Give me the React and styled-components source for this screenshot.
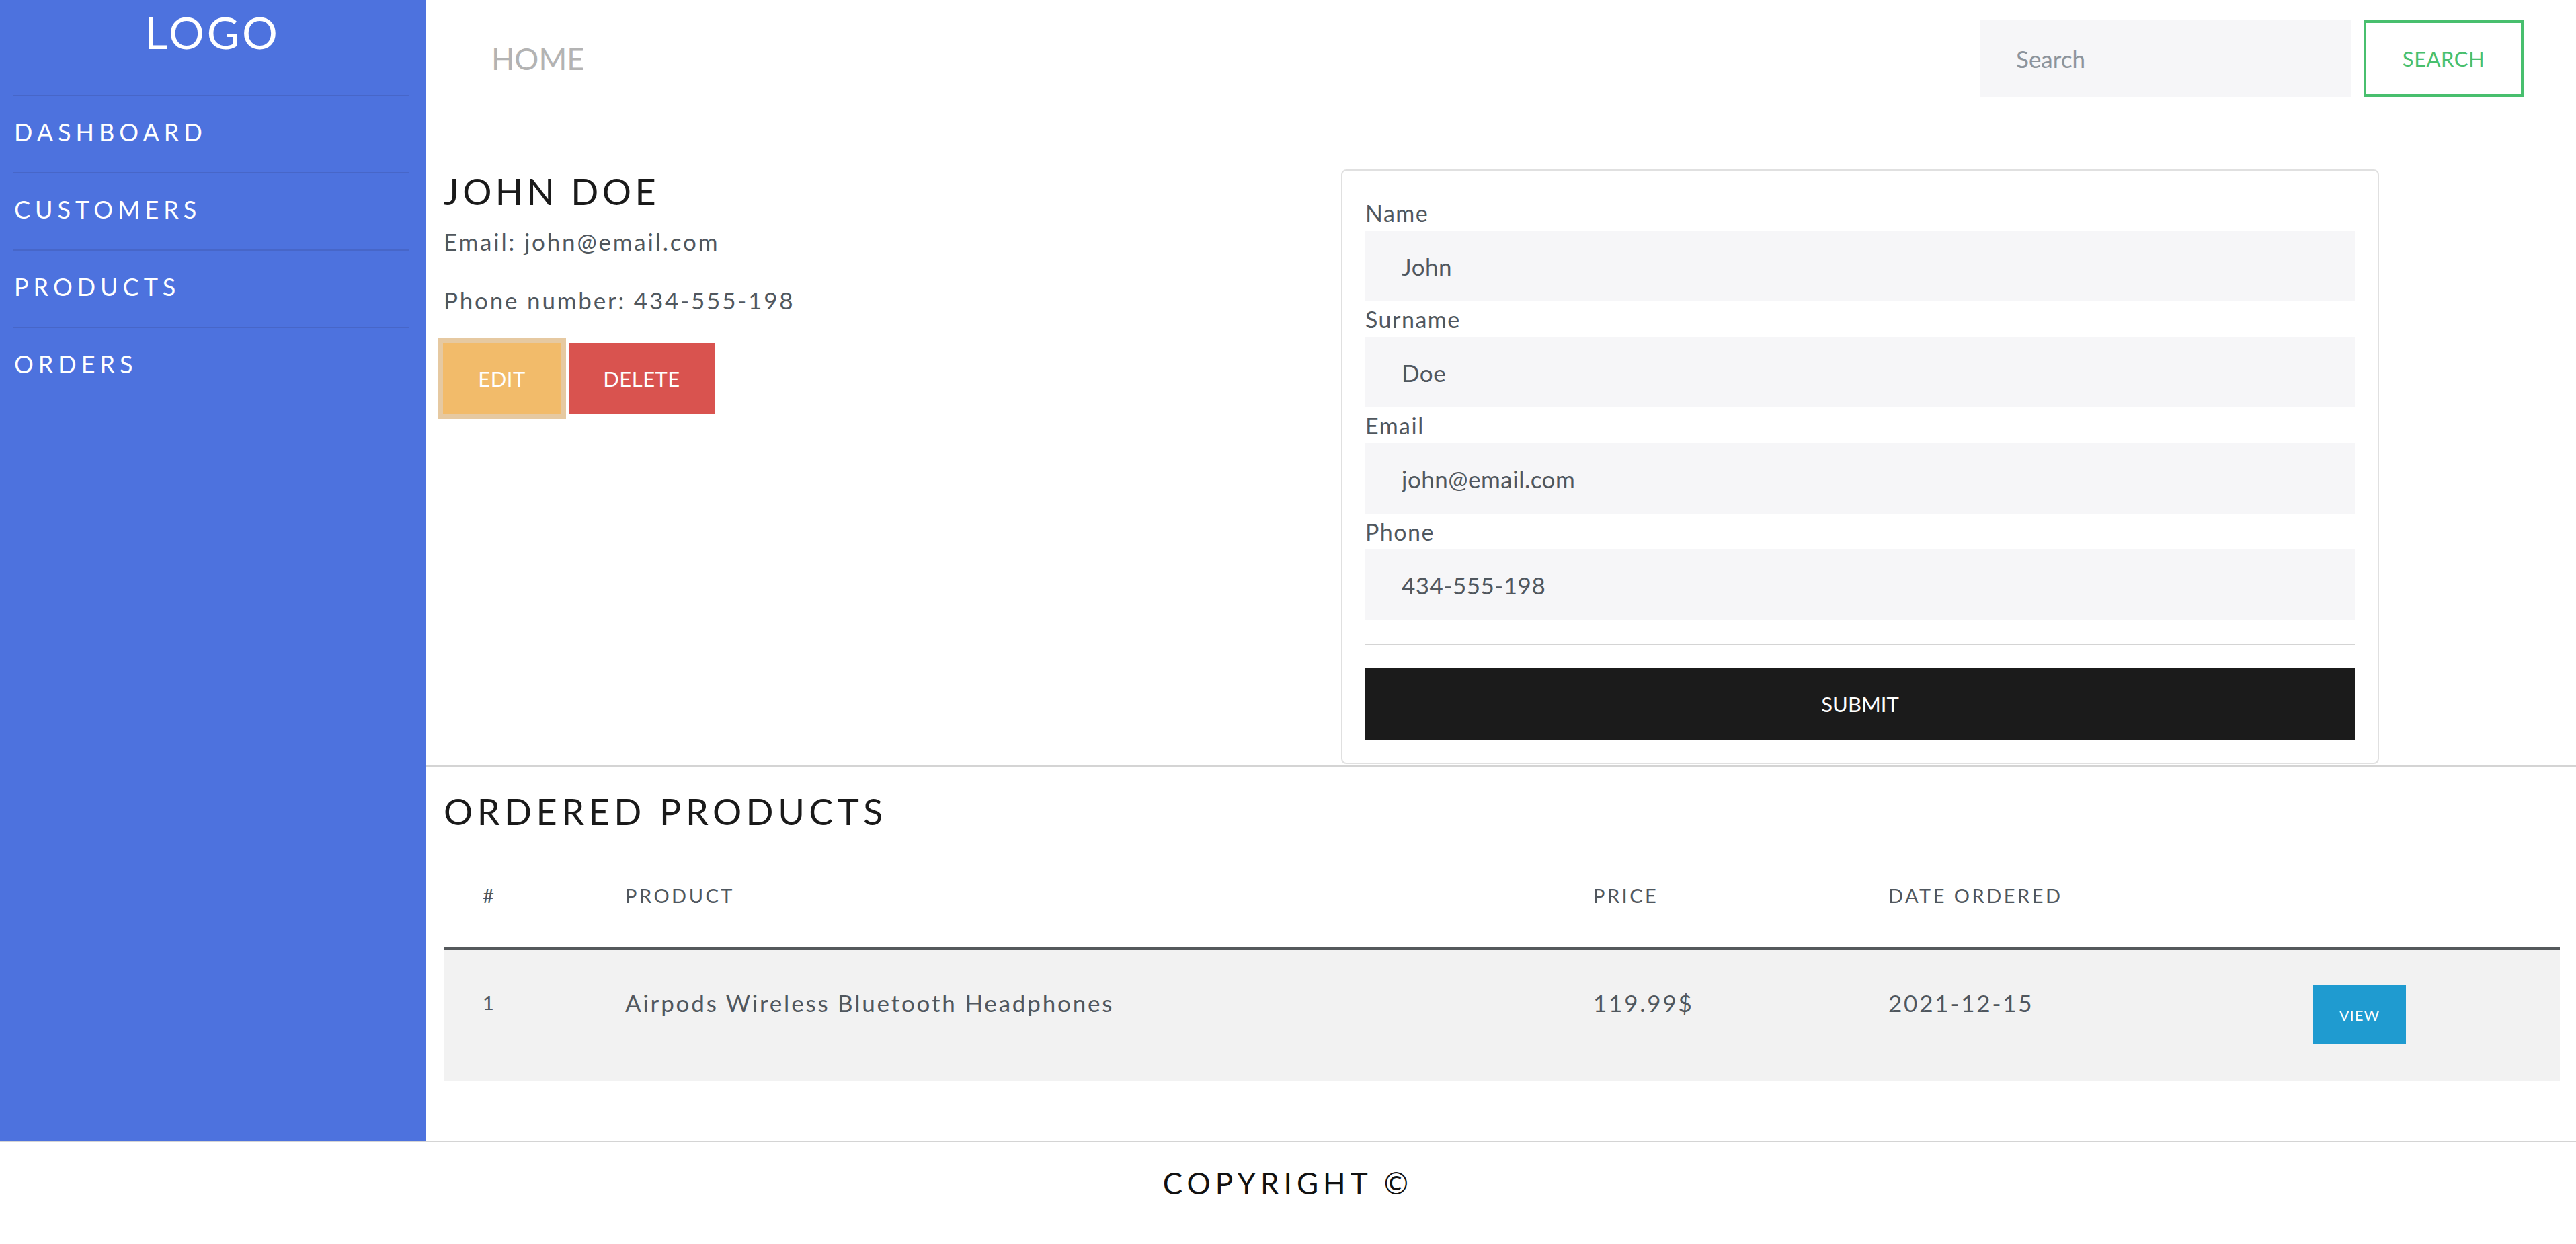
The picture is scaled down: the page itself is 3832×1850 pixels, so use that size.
import styled, { createGlobalStyle } from "styled-components";

const GlobalStyle = createGlobalStyle`
  html, body {
    margin: 0;
    padding: 0;
    background: #ffffff;
    font-family: Lato, "Open Sans", sans-serif;
  }
  * { box-sizing: border-box; }
`;

const customer = {
  name: "John",
  surname: "Doe",
  email: "john@email.com",
  phone: "434-555-198",
};

const orders = [
  { id: 1, product: "Airpods Wireless Bluetooth Headphones", price: "119.99$", date: "2021-12-15" },
];

const navItems = ["DASHBOARD", "CUSTOMERS", "PRODUCTS", "ORDERS"];

const columns = [
  { label: "#", width: 212 },
  { label: "PRODUCT", width: 1440 },
  { label: "PRICE", width: 439 },
  { label: "DATE ORDERED", width: 632 },
  { label: "", width: 425 },
];

export default function App() {
  return (
    <>
      <GlobalStyle />
      <Layout>
        <Sidebar>
          <Logo>LOGO</Logo>
          {navItems.map((item) => (
            <NavItem key={item}>{item}</NavItem>
          ))}
        </Sidebar>
        <Main>
          <TopBar>
            <HomeLink>HOME</HomeLink>
            <SearchForm>
              <SearchInput placeholder="Search" />
              <SearchButton>SEARCH</SearchButton>
            </SearchForm>
          </TopBar>

          <Details>
            <Info>
              <Heading $spacing="0.1em">JOHN DOE</Heading>
              <InfoLine>Email: {customer.email}</InfoLine>
              <InfoLine $gap>Phone number: {customer.phone}</InfoLine>
              <Actions>
                <ActionButton $color="#f2bb6a" $focused>EDIT</ActionButton>
                <ActionButton $color="#d9534f">DELETE</ActionButton>
              </Actions>
            </Info>
            <Card>
              <Label>Name</Label>
              <Field defaultValue={customer.name} />
              <Label>Surname</Label>
              <Field defaultValue={customer.surname} />
              <Label>Email</Label>
              <Field defaultValue={customer.email} />
              <Label>Phone</Label>
              <Field defaultValue={customer.phone} />
              <Divider />
              <SubmitButton>SUBMIT</SubmitButton>
            </Card>
          </Details>

          <Ordered>
            <Heading>ORDERED PRODUCTS</Heading>
            <Table>
              <colgroup>
                {columns.map((c, i) => (
                  <col key={i} style={{ width: c.width }} />
                ))}
              </colgroup>
              <thead>
                <tr>
                  {columns.map((c, i) => (
                    <Th key={i}>{c.label}</Th>
                  ))}
                </tr>
              </thead>
              <tbody>
                {orders.map((o) => (
                  <tr key={o.id}>
                    <Td $small>{o.id}</Td>
                    <Td>{o.product}</Td>
                    <Td>{o.price}</Td>
                    <Td>{o.date}</Td>
                    <Td>
                      <ViewButton>VIEW</ViewButton>
                    </Td>
                  </tr>
                ))}
              </tbody>
            </Table>
          </Ordered>
        </Main>
      </Layout>
      <Footer>COPYRIGHT ©</Footer>
    </>
  );
}

const Layout = styled.div`
  display: flex;
  min-height: 1697px;
`;

const Sidebar = styled.aside`
  width: 634px;
  flex-shrink: 0;
  background-color: #4d72de;
  padding: 0 26px 0 20px;
`;

const Logo = styled.div`
  height: 141px;
  color: #ffffff;
  font-size: 66px;
  letter-spacing: 4px;
  text-align: center;
  line-height: 96px;
  padding-left: 4px;
`;

const NavItem = styled.div`
  height: 115px;
  border-top: 2px solid #4766c8;
  display: flex;
  align-items: center;
  padding: 0 0 8px 1px;
  color: #ffffff;
  font-size: 36px;
  letter-spacing: 7px;
`;

const Main = styled.main`
  flex: 1;
  min-width: 0;
`;

const TopBar = styled.header`
  height: 178px;
  display: flex;
  align-items: center;
  justify-content: space-between;
  padding: 0 78px 4px 97px;
`;

const HomeLink = styled.span`
  color: #b3b3b3;
  font-size: 45px;
`;

const SearchForm = styled.form`
  display: flex;
  gap: 18px;
  margin: 0;
`;

const SearchInput = styled.input`
  width: 553px;
  height: 114px;
  border: none;
  outline: none;
  background: #f6f6f8;
  padding: 0 54px;
  font-family: inherit;
  font-size: 35px;
  color: #50575e;
  &::placeholder {
    color: #8d949c;
  }
`;

const SearchButton = styled.button`
  width: 238px;
  height: 114px;
  background: #ffffff;
  border: 4px solid #48bf6e;
  color: #48bf6e;
  font-family: inherit;
  font-size: 31px;
  letter-spacing: 0.5px;
`;

const Details = styled.section`
  display: grid;
  grid-template-columns: 1335px 1544px;
  padding: 74px 0 0 26px;
`;

const Info = styled.div`
  padding-top: 0;
`;

const Heading = styled.h2`
  margin: 0;
  font-size: 54px;
  font-weight: 400;
  line-height: 65px;
  letter-spacing: ${(p) => p.$spacing || "0.12em"};
  color: #1a1a1a;
`;

const InfoLine = styled.p`
  margin: ${(p) => (p.$gap ? "35px" : "16px")} 0 0;
  font-size: 35px;
  line-height: 52px;
  letter-spacing: 2.8px;
  color: #50575e;
`;

const Actions = styled.div`
  display: flex;
  gap: 12px;
  margin-top: 38px;
`;

const ActionButton = styled.button`
  width: ${(p) => (p.$focused ? "175px" : "217px")};
  height: 105px;
  border: none;
  background: ${(p) => p.$color};
  color: #ffffff;
  font-family: inherit;
  font-size: 31px;
  letter-spacing: 0.5px;
  box-shadow: ${(p) => (p.$focused ? "0 0 0 8px #e6c9a1" : "none")};
  margin-left: ${(p) => (p.$focused ? "-1px" : "0")};
`;

const Card = styled.form`
  border: 2px solid #e0e0e0;
  border-radius: 8px;
  padding: 36px 34px 34px;
  margin: 0;
  height: 884px;
`;

const Label = styled.label`
  display: block;
  font-size: 34px;
  line-height: 48px;
  letter-spacing: 1.5px;
  color: #50575e;
  margin-top: 3px;
`;

const Field = styled.input`
  display: block;
  width: 100%;
  height: 105px;
  border: none;
  outline: none;
  background: #f6f6f8;
  padding: 0 54px;
  font-family: inherit;
  font-size: 35px;
  letter-spacing: 0.5px;
  color: #50575e;
  margin-top: 2px;
`;

const Divider = styled.hr`
  border: none;
  border-top: 2px solid #d4d4d4;
  margin: 35px 0 35px;
`;

const SubmitButton = styled.button`
  width: 100%;
  height: 106px;
  border: none;
  background: #1b1b1b;
  color: #ffffff;
  font-family: inherit;
  font-size: 31px;
`;

const Ordered = styled.section`
  border-top: 2px solid #d4d4d4;
  margin-top: 2px;
  padding: 34px 24px 88px 26px;
`;

const Table = styled.table`
  width: 3148px;
  border-collapse: collapse;
  table-layout: fixed;
  margin-top: 19px;
`;

const Th = styled.th`
  text-align: left;
  font-weight: 400;
  font-size: 29px;
  line-height: 44px;
  letter-spacing: 3.5px;
  color: #50575e;
  padding: 52px 0 54px 58px;
  border-bottom: 5px solid #55595c;
`;

const Td = styled.td`
  vertical-align: top;
  background: #f2f2f2;
  font-size: ${(p) => (p.$small ? "29px" : "35px")};
  line-height: 52px;
  letter-spacing: 2.8px;
  color: #50575e;
  padding: 52px 0 54px 58px;
`;

const ViewButton = styled.button`
  width: 138px;
  height: 88px;
  border: none;
  background: #1f9bd0;
  color: #ffffff;
  font-family: inherit;
  font-size: 22px;
  letter-spacing: 1px;
`;

const Footer = styled.footer`
  height: 153px;
  border-top: 2px solid #d4d4d4;
  text-align: center;
  padding-top: 34px;
  font-size: 44px;
  line-height: 53px;
  letter-spacing: 7px;
  color: #111111;
`;
